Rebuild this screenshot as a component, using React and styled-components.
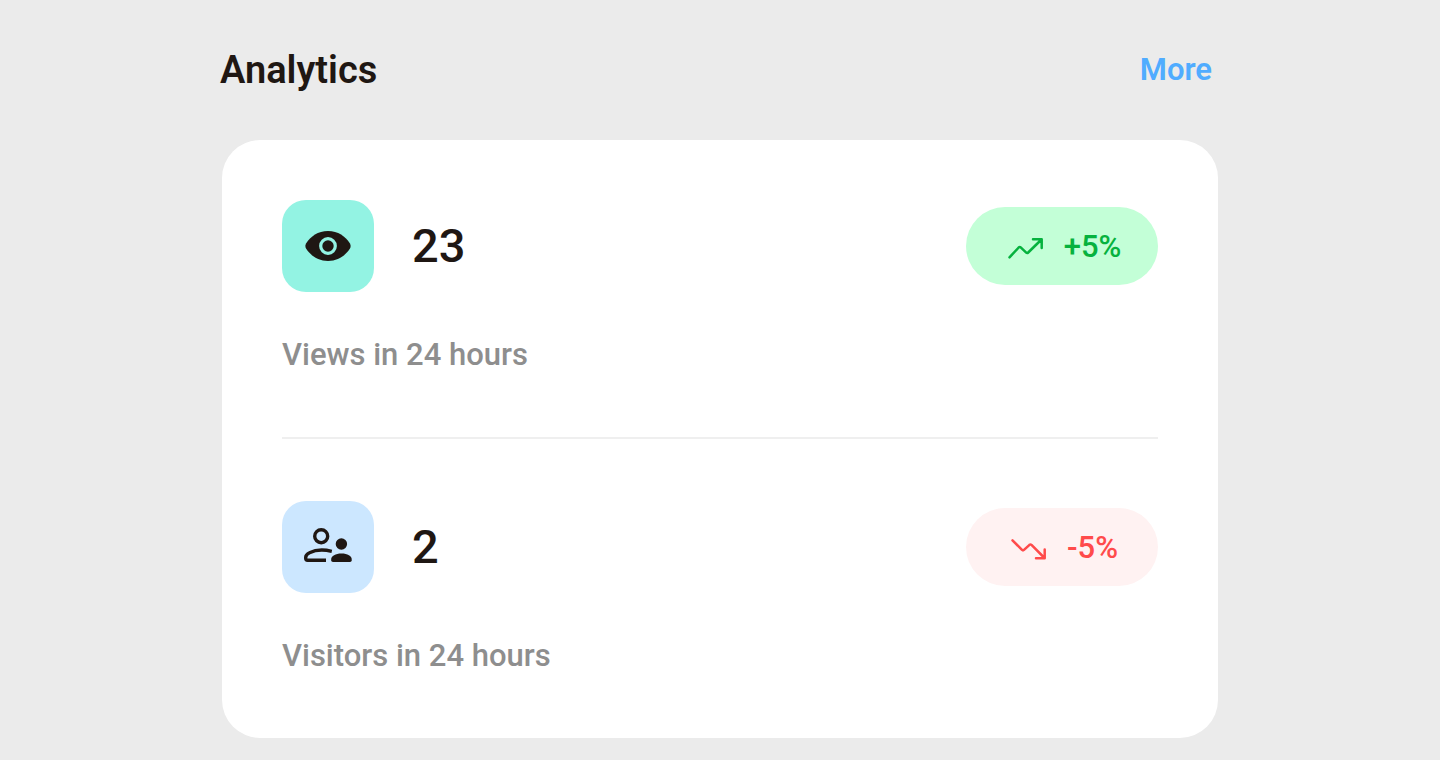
import React from "react";
import styled, { createGlobalStyle } from "styled-components";

const GlobalStyle = createGlobalStyle`
  *, *::before, *::after { box-sizing: border-box; }
  body {
    margin: 0;
    background: #ffffff;
    color: #1f1713;
    font-family: Roboto, "Liberation Sans", sans-serif;
    font-weight: 500;
  }
`;

const Page = styled.main`
  min-height: 100vh;
  padding: 40px 24px 22px;
  background: #ebebeb;
  border-bottom: 1px solid #ffffff;
`;

const Section = styled.section`
  max-width: 1000px;
  margin: 0 auto;
`;

const Header = styled.header`
  display: flex;
  align-items: center;
  justify-content: space-between;
  padding-right: 8px;
  margin-bottom: 40px;
`;

const Title = styled.h1`
  margin: 0;
  font-size: 38px;
  line-height: 60px;
  font-weight: 600;
`;

const MoreLink = styled.a`
  color: #50acff;
  font-size: 31px;
  line-height: 60px;
  font-weight: 600;
  text-decoration: none;
`;

const Card = styled.div`
  margin: 0 2px;
  padding: 0 60px;
  background: #ffffff;
  border-radius: 38px;
`;

const Metric = styled.article`
  padding: 60px 0;

  & + & {
    padding-top: 62px;
    border-top: 2px solid #efefef;
  }
`;

const MetricRow = styled.div`
  display: flex;
  align-items: center;
  margin-bottom: 40px;
`;

const Tile = styled.div`
  display: flex;
  align-items: center;
  justify-content: center;
  width: 92px;
  height: 92px;
  border-radius: 24px;
  background: ${({ $color }) => $color};
`;

const Value = styled.strong`
  margin-left: 38px;
  font-size: 47px;
  line-height: 60px;
  font-weight: 500;
`;

const Label = styled.p`
  margin: 0;
  color: #8e8e8e;
  font-size: 31px;
  line-height: 45px;
`;

const Pill = styled.span`
  display: flex;
  align-items: center;
  justify-content: center;
  gap: 21px;
  width: 192px;
  height: 78px;
  margin-left: auto;
  border-radius: 39px;
  font-size: 31px;
  line-height: 45px;
  color: ${({ $up }) => ($up ? "#06b23e" : "#ff4b4b")};
  background: ${({ $up }) => ($up ? "#c3ffd7" : "#fff2f2")};
`;

function EyeIcon() {
  return (
    <svg width="46" height="30" viewBox="0 0 46 30" aria-hidden="true">
      <path
        fill="#1f1713"
        d="M23 0C33 0 40.500 5.500 44.800 12.200Q46.500 15 44.800 17.800C40.500 24.500 33 30 23 30S5.500 24.500 1.200 17.800Q-.5 15 1.200 12.200C5.500 5.500 13 0 23 0Z"
      />
      <circle cx="23" cy="15" r="7.300" fill="none" stroke="#93f3e3" strokeWidth="3.200" />
    </svg>
  );
}

function VisitorsIcon() {
  return (
    <svg width="48" height="38" viewBox="0 0 48 38" aria-hidden="true">
      <g fill="none" stroke="#1f1713" strokeWidth="3.400">
        <circle cx="17.200" cy="8.200" r="6.500" />
        <path d="M22 32.300H3.600Q1.700 32.300 1.700 30.300V29.500C1.700 27 3.200 25.700 5.500 24.700C11.500 21.800 20 21.500 27.800 23.300" />
      </g>
      <g fill="#1f1713">
        <circle cx="37.400" cy="16" r="5.700" />
        <path d="M29 34Q27.200 34 27.200 32.200V31C27.200 28 31.500 25.400 37.500 25.400S47.700 28 47.700 31V32.200Q47.700 34 46 34Z" />
      </g>
    </svg>
  );
}

function TrendIcon({ up }) {
  return (
    <svg
      width="40"
      height="40"
      viewBox="0 0 40 40"
      fill="none"
      stroke="currentColor"
      strokeWidth="2.500"
      strokeLinecap="round"
      strokeLinejoin="round"
      aria-hidden="true"
    >
      {up ? (
        <path d="M6.500 31.300L15.700 21.500Q16.700 20.500 17.700 21.400L23.200 26.600Q24.200 27.500 25.200 26.500L38.500 13.500M30 13.300H38.700V22" />
      ) : (
        <path d="M6.500 13.300L16 22.900Q17 23.800 18 22.900L23.500 17.800Q24.500 17 25.500 17.900L38.500 31M30 31.300H38.700V22.500" />
      )}
    </svg>
  );
}

const metrics = [
  { label: "Views in 24 hours", value: "23", change: "+5%", up: true, color: "#93f3e3", Icon: EyeIcon },
  { label: "Visitors in 24 hours", value: "2", change: "-5%", up: false, color: "#cce7ff", Icon: VisitorsIcon },
];

export default function App() {
  return (
    <>
      <GlobalStyle />
      <Page>
        <Section aria-labelledby="analytics-title">
          <Header>
            <Title id="analytics-title">Analytics</Title>
            <MoreLink href="#more">More</MoreLink>
          </Header>
          <Card>
            {metrics.map(({ label, value, change, up, color, Icon }) => (
              <Metric key={label}>
                <MetricRow>
                  <Tile $color={color}>
                    <Icon />
                  </Tile>
                  <Value>{value}</Value>
                  <Pill $up={up}>
                    <TrendIcon up={up} />
                    {change}
                  </Pill>
                </MetricRow>
                <Label>{label}</Label>
              </Metric>
            ))}
          </Card>
        </Section>
      </Page>
    </>
  );
}
